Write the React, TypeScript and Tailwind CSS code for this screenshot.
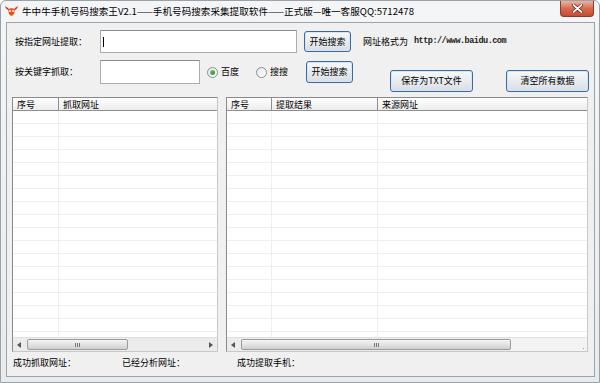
import React from 'react';

const cjk = "font-['Noto_Sans_CJK_SC','Noto_Sans',sans-serif]";

function Btn({ label, w, h, className = '' }: { label: string; w: string; h: string; className?: string }) {
  return (
    <div
      className={`${w} ${h} ${className} flex items-center justify-center rounded-[3px] border border-[#3d6a9c] bg-gradient-to-b from-[#f6f8fa] via-[#e9ecef] to-[#d9dde2] shadow-[inset_0_0_0_1px_#d7e6f5] text-[9px] text-black`}
    >
      {label}
    </div>
  );
}

function Radio({ checked }: { checked?: boolean }) {
  return (
    <div className="w-[11px] h-[11px] rounded-full border border-[#8a8f94] bg-gradient-to-br from-[#e4e6e8] to-white flex items-center justify-center">
      {checked && <div className="w-[5px] h-[5px] rounded-full bg-gradient-to-br from-[#7ad36b] to-[#1f8a1f]" />}
    </div>
  );
}

function Arrow({ dir }: { dir: 'l' | 'r' }) {
  return (
    <div className="w-[12px] h-full flex items-center justify-center">
      <svg width="4" height="6" viewBox="0 0 4 6">
        {dir === 'l' ? <path d="M4 0 L0 3 L4 6 Z" fill="#555" /> : <path d="M0 0 L4 3 L0 6 Z" fill="#555" />}
      </svg>
    </div>
  );
}

function Thumb({ w }: { w: string }) {
  return (
    <div className={`${w} h-[11px] rounded-[2px] border border-[#9c9c9c] bg-gradient-to-b from-[#f4f4f4] via-[#e3e3e3] to-[#cfcfcf] flex items-center justify-center gap-[1px]`}>
      <div className="w-px h-[4px] bg-[#777]" />
      <div className="w-px h-[4px] bg-[#777]" />
      <div className="w-px h-[4px] bg-[#777]" />
    </div>
  );
}

type Col = { title: string; w?: string };

function ListView({ cols, w, scroll }: { cols: Col[]; w: string; scroll: React.ReactNode }) {
  const rows = Array.from({ length: 18 });
  return (
    <div className={`${w} h-[255px] border border-[#8a8a8a] border-r-[#c8c8c8] border-b-[#c8c8c8] bg-white flex flex-col overflow-hidden`}>
      <div className="h-[13px] flex shrink-0 bg-gradient-to-b from-white to-[#ececec] border-b border-[#8f8f8f]">
        {cols.map((c, i) => (
          <div
            key={i}
            className={`${c.w ?? 'flex-1'} h-full pl-[4px] flex items-center text-[9px] leading-none ${i < cols.length - 1 ? 'border-r border-[#8f8f8f]' : ''}`}
          >
            {c.title}
          </div>
        ))}
      </div>
      <div className="flex-1 overflow-hidden flex flex-col">
        {rows.map((_, r) => (
          <div key={r} className="h-[13px] shrink-0 flex border-b border-[#efefef]">
            {cols.map((c, i) => (
              <div key={i} className={`${c.w ?? 'flex-1'} h-full ${i < cols.length - 1 ? 'border-r border-[#efefef]' : ''}`} />
            ))}
          </div>
        ))}
      </div>
      <div className="h-[14px] shrink-0 bg-[#ebebeb] border-t border-[#e0e0e0] flex items-center">{scroll}</div>
    </div>
  );
}

function BullIcon() {
  return (
    <svg width="15" height="13" viewBox="0 0 15 13">
      <path d="M1 1 Q2 5 5 5 L4 3 Z" fill="#d0301c" />
      <path d="M14 1 Q13 5 10 5 L11 3 Z" fill="#d0301c" />
      <path d="M4 4 Q7.5 2.5 11 4 L10 9 Q7.5 13 5 9 Z" fill="#e2501c" />
      <circle cx="6" cy="6" r="0.9" fill="#fff" />
      <circle cx="9" cy="6" r="0.9" fill="#fff" />
      <path d="M6 10 Q7.5 11.5 9 10" stroke="#f0b020" strokeWidth="1" fill="none" />
    </svg>
  );
}

export default function App() {
  return (
    <div className={`w-[600px] h-[383px] ${cjk} text-black bg-gradient-to-b from-[#f4f5f7] to-[#e8ebee] border border-[#9aa1a9] rounded-t-[6px] flex flex-col overflow-hidden`}>
      {/* 标题栏 */}
      <div className="h-[21px] shrink-0 flex items-start">
        <div className="mt-[4px] ml-[3px]">
          <BullIcon />
        </div>
        <div className="mt-[4px] ml-[3px] text-[9.6px] leading-[12px] text-black whitespace-nowrap">
          牛中牛手机号码搜索王V2.1——手机号码搜索采集提取软件——正式版—唯一客服QQ:5712478
        </div>
        <div className="ml-auto mr-[5px] w-[34px] h-[16px] rounded-b-[4px] border border-t-0 border-[#8a3a2e] bg-gradient-to-b from-[#eab3a2] via-[#d66a50] to-[#c84a30] flex items-center justify-center">
          <svg width="11" height="9" viewBox="0 0 11 9">
            <path d="M1.5 1 L9.5 8 M9.5 1 L1.5 8" stroke="#5a1a10" strokeWidth="3.2" strokeLinecap="round" />
            <path d="M1.5 1 L9.5 8 M9.5 1 L1.5 8" stroke="#fff" strokeWidth="1.8" strokeLinecap="round" />
          </svg>
        </div>
      </div>

      {/* 客户区 */}
      <div className="ml-[5px] mr-[4px] mb-[5px] flex-1 border border-[#9ba3ab] bg-[#f0f0f0] flex flex-col">
        {/* 第一行 */}
        <div className="mt-[7px] h-[23px] flex items-center">
          <div className="ml-[8px] w-[85px] text-[9px]">按指定网址提取：</div>
          <div className="w-[197px] h-[23px] border border-[#abadb3] border-t-[#8a8c92] bg-white flex items-center">
            <div className="ml-[2px] w-px h-[10px] bg-black" />
          </div>
          <Btn label="开始搜索" w="w-[47px]" h="h-[21px]" className="ml-[7px]" />
          <div className="ml-[12px] text-[9px] whitespace-nowrap flex items-center">
            网址格式为
            <span className="ml-[6px] font-['Liberation_Mono',monospace] text-[8.5px] tracking-[-0.5px] font-bold text-[#222]">http://www.baidu.com</span>
          </div>
        </div>

        {/* 第二行 */}
        <div className="mt-[7px] h-[32px] flex items-start">
          <div className="ml-[8px] w-[85px] h-[24px] flex items-center text-[9px]">按关键字抓取：</div>
          <div className="w-[100px] h-[24px] border border-[#abadb3] border-t-[#8a8c92] bg-white" />
          <div className="h-[24px] flex items-center">
            <div className="ml-[7px]"><Radio checked /></div>
            <div className="ml-[3px] text-[9px]">百度</div>
            <div className="ml-[17px]"><Radio /></div>
            <div className="ml-[3px] text-[9px]">搜搜</div>
          </div>
          <Btn label="开始搜索" w="w-[47px]" h="h-[22px]" className="ml-[18px] mt-[1px]" />
          <Btn label="保存为TXT文件" w="w-[83px]" h="h-[22px]" className="ml-[37px] mt-[10px]" />
          <Btn label="清空所有数据" w="w-[83px]" h="h-[22px]" className="ml-[33px] mt-[10px]" />
        </div>

        {/* 列表 */}
        <div className="mt-[5px] flex">
          <div className="ml-[5px]">
            <ListView
              w="w-[206px]"
              cols={[{ title: '序号', w: 'w-[46px]' }, { title: '抓取网址' }]}
              scroll={
                <>
                  <Arrow dir="l" />
                  <div className="ml-[2px]"><Thumb w="w-[101px]" /></div>
                  <div className="flex-1" />
                  <Arrow dir="r" />
                </>
              }
            />
          </div>
          <div className="ml-[8px]">
            <ListView
              w="w-[362px]"
              cols={[{ title: '序号', w: 'w-[45px]' }, { title: '提取结果', w: 'w-[106px]' }, { title: '来源网址' }]}
              scroll={
                <>
                  <Arrow dir="l" />
                  <div className="ml-[2px]"><Thumb w="w-[270px]" /></div>
                  <div className="flex-1 h-full bg-[#f3f3f3] flex items-end justify-end pr-[3px] pb-[2px]">
                    <div className="w-px h-px bg-[#999]" />
                  </div>
                </>
              }
            />
          </div>
        </div>

        {/* 状态 */}
        <div className="h-[22px] flex items-center text-[9px]">
          <div className="ml-[6px] w-[109px]">成功抓取网址：</div>
          <div className="w-[115px]">已经分析网址：</div>
          <div>成功提取手机：</div>
        </div>
      </div>
    </div>
  );
}
